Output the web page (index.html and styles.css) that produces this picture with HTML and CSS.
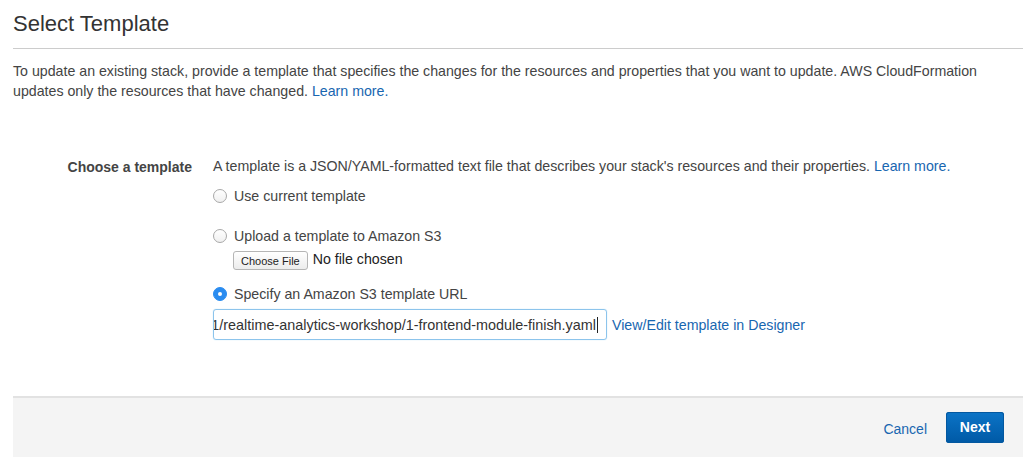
FILE: index.html
```html
<!DOCTYPE html>
<html>
<head>
<meta charset="utf-8">
<link rel="stylesheet" href="styles.css">
</head>
<body>
<div class="page">
  <h1 class="title">Select Template</h1>
  <p class="intro">To update an existing stack, provide a template that specifies the changes for the resources and properties that you want to update. AWS CloudFormation updates only the resources that have changed. <a class="link" href="#">Learn more.</a></p>

  <div class="form">
    <div class="label">Choose a template</div>
    <div class="field">
      <div class="desc">A template is a JSON/YAML-formatted text file that describes your stack's resources and their properties. <a class="link" href="#">Learn more.</a></div>
      <div class="option opt1"><span class="radio"></span><span>Use current template</span></div>
      <div class="option opt2"><span class="radio"></span><span>Upload a template to Amazon S3</span></div>
      <div class="file"><span class="filebtn">Choose File</span><span class="nofile">No file chosen</span></div>
      <div class="option opt3"><span class="radio checked"></span><span>Specify an Amazon S3 template URL</span></div>
      <div class="urlrow">
        <div class="urlinput"><span class="urltext">https://s3.amazonaws.com/aws-bigdata-blog/artifacts/us-east-1/realtime-analytics-workshop/1-frontend-module-finish.yaml</span><span class="caret"></span></div>
        <a class="link designer" href="#">View/Edit template in Designer</a>
      </div>
    </div>
  </div>

  <div class="footer">
    <a class="link cancel" href="#">Cancel</a>
    <span class="next">Next</span>
  </div>
</div>
</body>
</html>
```
FILE: styles.css
```css
html, body {
  margin: 0;
  padding: 0;
  background: #fff;
}
body {
  font-family: "Liberation Sans", Arial, Helvetica, sans-serif;
  font-size: 14.2px;
  color: #444;
}
.page {
  padding: 0 9px 0 13px;
}
.title {
  margin: 0;
  padding-top: 10px;
  font-size: 22px;
  font-weight: normal;
  color: #333;
  line-height: 28px;
  height: 38px;
  border-bottom: 1px solid #ccc;
}
.intro {
  margin: 12px 0 0 0;
  line-height: 20px;
  color: #444;
}
.link {
  color: #1866b0;
  text-decoration: none;
}
.form {
  display: grid;
  grid-template-columns: 179px 1fr;
  column-gap: 21px;
  margin-top: 55px;
}
.label {
  text-align: right;
  font-weight: bold;
  font-size: 14px;
  color: #444;
  line-height: 20px;
  padding-top: 1px;
}
.field {
  display: flex;
  flex-direction: column;
}
.desc {
  line-height: 20px;
}
.option {
  display: flex;
  align-items: center;
  gap: 7px;
  height: 20px;
}
.opt1 { margin-top: 10px; }
.opt2 { margin-top: 20px; }
.opt3 { margin-top: 14px; }
.radio {
  width: 12px;
  height: 12px;
  border: 1px solid #a8a8a8;
  border-radius: 50%;
  background: linear-gradient(#fff, #f0f0f0);
  box-sizing: content-box;
  flex: none;
}
.radio.checked {
  border-color: #2a8cf0;
  background: #2a8cf0;
  position: relative;
}
.radio.checked::after {
  content: "";
  position: absolute;
  left: 4px;
  top: 4px;
  width: 4px;
  height: 4px;
  border-radius: 50%;
  background: #fff;
}
.file {
  display: flex;
  align-items: center;
  gap: 5px;
  margin-left: 20px;
  margin-top: 5px;
}
.filebtn {
  font-size: 11px;
  color: #222;
  border: 1px solid #b5b5b5;
  border-radius: 3px;
  background: linear-gradient(#fff, #ececec);
  padding: 2px 7px 1px 7px;
  line-height: 14px;
}
.nofile {
  color: #222;
  line-height: 18px;
  margin-top: -4px;
}
.urlrow {
  display: flex;
  align-items: center;
  gap: 5px;
  margin-top: 5px;
}
.urlinput {
  width: 384px;
  height: 29px;
  border: 1px solid #8cc4ec;
  border-radius: 3px;
  box-shadow: 0 0 1px #9cd0f5;
  display: flex;
  align-items: center;
  justify-content: flex-end;
  overflow: hidden;
  white-space: nowrap;
  padding-right: 8px;
  box-sizing: content-box;
  color: #333;
  font-size: 14.4px;
}
.urltext {
  flex: none;
}
.caret {
  flex: none;
  width: 1px;
  height: 16px;
  background: #222;
  margin-left: 1px;
}
.designer {
  line-height: 20px;
}
.footer {
  margin-top: 56px;
  height: 59px;
  background: #f4f4f4;
  border-top: 2px solid #e2e2e2;
  display: flex;
  align-items: center;
  justify-content: flex-end;
  padding-right: 19px;
  gap: 19px;
}
.cancel {
  font-size: 14px;
  margin-top: 2px;
}
.next {
  display: inline-block;
  width: 58px;
  height: 31px;
  line-height: 31px;
  text-align: center;
  color: #fff;
  font-weight: bold;
  font-size: 14px;
  border-radius: 3px;
  background: linear-gradient(#0b74c7, #0059a5);
  box-shadow: inset 0 0 0 1px #0358a0;
}
```
